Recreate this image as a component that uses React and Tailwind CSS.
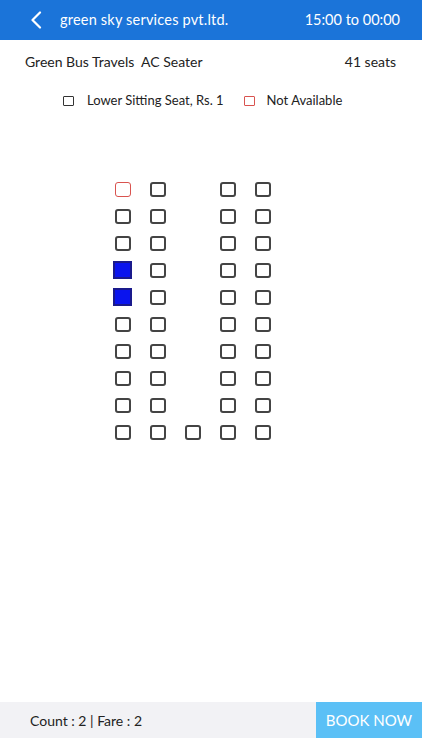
import React from "react";

const layout = [
  ["na", "s", null, "s", "s"],
  ["s", "s", null, "s", "s"],
  ["s", "s", null, "s", "s"],
  ["sel", "s", null, "s", "s"],
  ["sel", "s", null, "s", "s"],
  ["s", "s", null, "s", "s"],
  ["s", "s", null, "s", "s"],
  ["s", "s", null, "s", "s"],
  ["s", "s", null, "s", "s"],
  ["s", "s", "s", "s", "s"],
];

function Seat({ type }) {
  if (!type) return <div className="w-[35px] h-[27px]" />;
  let cls = "w-[16px] h-[15px] rounded-[3px] border-2 border-[#444]";
  if (type === "na") cls = "w-[16px] h-[15px] rounded-[3px] border-[1.5px] border-[#d9534f]";
  if (type === "sel") cls = "w-[19px] h-[18px] border-2 border-[#1a1a8c] bg-[#0a14ee]";
  return (
    <div className="w-[35px] h-[27px] flex items-center justify-center">
      <div className={cls} />
    </div>
  );
}

export default function App() {
  return (
    <div className="w-[422px] h-[750px] bg-white flex flex-col text-[#222]" style={{ fontFamily: "Lato, 'Open Sans', sans-serif" }}>
      <div className="h-[40px] bg-[#1b74d9] flex items-center px-[30px] text-white shrink-0">
        <svg width="12" height="18" viewBox="0 0 12 18" className="mr-[18px]">
          <path d="M10 1.5 L2.5 9 L10 16.5" fill="none" stroke="white" strokeWidth="2.2" strokeLinecap="round" strokeLinejoin="round" />
        </svg>
        <span className="text-[14.5px] tracking-[0.2px]">green sky services pvt.ltd.</span>
        <span className="ml-auto text-[14.5px] mr-[-8px]">15:00 to 00:00</span>
      </div>
      <div className="flex items-center justify-between pl-[25px] pr-[26px] mt-[11px] text-[14px]">
        <span>Green Bus Travels&nbsp; AC Seater</span>
        <span>41 seats</span>
      </div>
      <div className="flex items-center mt-[19px] text-[13px] pl-[63px]">
        <div className="w-[11px] h-[10px] border-[1.5px] border-[#333] rounded-[1px]" />
        <span className="ml-[13px]">Lower Sitting Seat, Rs. 1</span>
        <div className="w-[11px] h-[10px] border-[1.5px] border-[#d9534f] rounded-[1px] ml-[20px]" />
        <span className="ml-[12px]">Not Available</span>
      </div>
      <div className="flex flex-col items-start ml-[105px] mt-[65px]">
        {layout.map((row, i) => (
          <div key={i} className="flex">
            {row.map((t, j) => (
              <Seat key={j} type={t} />
            ))}
          </div>
        ))}
      </div>
      <div className="flex-1" />
      <div className="h-[36px] bg-[#f2f2f5] flex items-center mb-[12px] shrink-0">
        <span className="ml-[30px] text-[14px]">Count : 2 | Fare : 2</span>
        <div className="ml-auto w-[106px] h-full bg-[#5bc0f6] flex items-center justify-center text-white text-[15px]">BOOK NOW</div>
      </div>
    </div>
  );
}
